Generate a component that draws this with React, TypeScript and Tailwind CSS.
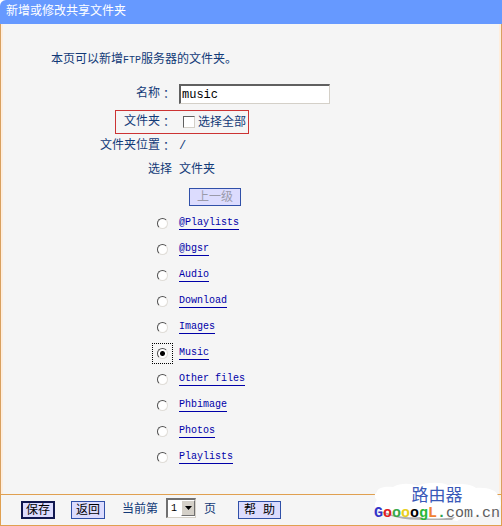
import React, { useState } from 'react';
import clsx from 'clsx';

const folders = [
  '@Playlists',
  '@bgsr',
  'Audio',
  'Download',
  'Images',
  'Music',
  'Other files',
  'Phbimage',
  'Photos',
  'Playlists',
];

const logoLetters = [
  { char: 'G', color: 'text-[#3434c8]' },
  { char: 'o', color: 'text-[#e02020]' },
  { char: 'o', color: 'text-[#38a848]' },
  { char: 'o', color: 'text-[#e8d020]' },
  { char: 'o', color: 'text-black' },
  { char: 'g', color: 'text-[#28b838]' },
  { char: 'L', color: 'text-[#f08030]' },
  { char: '.', color: 'text-[#30a050]' },
];

interface FormButtonProps {
  children: React.ReactNode;
  className?: string;
  disabled?: boolean;
}

const FormButton: React.FC<FormButtonProps> = ({ children, className, disabled }) => (
  <button
    type="button"
    disabled={disabled}
    className={clsx(
      'h-[18px] shrink-0 bg-[#dcdcfe] pt-px text-center leading-4 whitespace-pre',
      disabled ? 'text-[#9a9aaa]' : 'text-black',
      className
    )}
  >
    {children}
  </button>
);

// The TC face centres the full-width colon in its box
const Colon: React.FC = () => (
  <span className="inline-block align-top font-['Noto_Sans_CJK_TC',sans-serif] leading-4">：</span>
);

const SiteLogo: React.FC = () => (
  <div className="absolute right-0 bottom-1 h-10 w-32">
    <svg viewBox="0 0 128 40" className="absolute inset-0 h-full w-full" aria-hidden="true">
      <path d="M4 28 C14 36 32 39 50 39 L80 39 C86 38 87 36 84 33 L50 31 Z" fill="#b0b0b0" />
      <path
        d="M4 11 C4 6 14 5 20 6 C27 2 38 2 44 5 C54 1 68 1 75 4 C87 2 98 3 103 7 C114 6 124 9 125 15 C130 21 128 31 118 33 C110 36 98 35 93 35 L84 40 L79 39 L82 36 C67 38 53 38 47 36 C34 37 20 35 15 32 C3 31 -1 25 4 19 C1 16 1 13 4 11 Z"
        fill="#ffffff"
      />
    </svg>
    <div className="relative pt-1 text-center">
      <p className="text-[17px] leading-6 text-[#3858b8]">路由器</p>
      <p className="text-[15px] leading-[10px] text-[#606060]">
        {logoLetters.map((letter, i) => (
          <span key={i} className={clsx('font-bold', letter.color)}>{letter.char}</span>
        ))}
        com.cn
      </p>
    </div>
  </div>
);

const App: React.FC = () => {
  const [name, setName] = useState('music');
  const [selected, setSelected] = useState('Music');

  return (
    <div className="bg-white font-['Liberation_Mono','Noto_Sans_CJK_SC',monospace] text-[12px] leading-4 text-[#123a78]">
      <div className="flex min-h-screen flex-col overflow-hidden rounded-tl-md">
        <header className="flex h-6 items-center bg-[#6699ff] pl-[6px] text-white">
          <h1>新增或修改共享文件夹</h1>
        </header>

        <main className="flex-1 border-x border-[#d8a060] bg-[#f5f5f5] pt-7 pb-4 shadow-[inset_2px_0_#ffeedd,inset_-2px_0_#ffeedd]">
          <p className="pl-[50px]">
            本页可以新增<span className="text-[10px]">FTP</span>服务器的文件夹。
          </p>

          <div className="mt-[15px] flex h-5 items-center gap-[7px]">
            <label htmlFor="name" className="w-[171px] text-right">名称<Colon /></label>
            <input
              id="name"
              type="text"
              value={name}
              onChange={(e) => setName(e.target.value)}
              className="h-5 w-[151px] border border-t-2 border-l-2 border-[#d4d0c8] border-t-[#606060] border-l-[#606060] bg-white px-px text-black outline-none"
            />
          </div>

          <div className="mt-[6px] ml-[114px] flex h-6 w-[134px] items-center border border-[#cc3333]">
            <span className="w-14 text-right">文件夹<Colon /></span>
            <input
              id="all"
              type="checkbox"
              className="mr-[3px] ml-[11px] h-3 w-3 appearance-none border border-[#d4d0c8] border-t-[#606060] border-l-[#606060] bg-white checked:bg-[#606060]"
            />
            <label htmlFor="all" className="pt-[2px] whitespace-nowrap">选择全部</label>
          </div>

          <div className="mt-1 flex h-4 gap-[7px]">
            <span className="w-[171px] text-right">文件夹位置<Colon /></span>
            <span>/</span>
          </div>

          <div className="mt-2 flex h-4 gap-[7px]">
            <span className="w-[171px] text-right">选择</span>
            <span>文件夹</span>
          </div>

          <div className="mt-[10px] flex pl-[188px]">
            <FormButton disabled className="w-[52px] border border-[#3050a8]">上一级</FormButton>
          </div>

          <ul className="mt-1">
            {folders.map((folder) => (
              <li key={folder} className="flex h-[26px] items-center gap-[6px] pl-[151px]">
                <span
                  className={clsx(
                    'flex h-[21px] w-[21px] items-center justify-center border border-dotted',
                    selected === folder ? 'border-black' : 'border-transparent'
                  )}
                >
                  <input
                    type="radio"
                    name="folder"
                    aria-label={folder}
                    checked={selected === folder}
                    onChange={() => setSelected(folder)}
                    className="h-[11px] w-[11px] appearance-none rounded-full border border-[#e0ddd8] border-t-[#505050] border-l-[#505050] bg-white outline-none checked:bg-[radial-gradient(circle,#000_2px,#fff_3px)]"
                  />
                </span>
                <a
                  href="#"
                  className="border-b border-[#0000a8] text-[10px] leading-3 text-[#0000a8]"
                >
                  {folder}
                </a>
              </li>
            ))}
          </ul>
        </main>

        <footer className="relative flex h-8 items-center border border-[#e0a050] bg-[#f5f5f5] pl-5">
          <FormButton className="w-[34px] border-2 border-[#101850] leading-[14px]">保存</FormButton>
          <FormButton className="ml-4 w-[34px] border border-[#3050a8]">返回</FormButton>
          <label htmlFor="page" className="ml-[17px] whitespace-nowrap">当前第</label>
          <span className="relative mb-1 ml-2 flex">
            <select
              id="page"
              className="h-5 w-[30px] appearance-none border border-t-2 border-l-2 border-[#d4d0c8] border-t-[#707070] border-l-[#707070] bg-white pl-[3px] text-[10px] text-black outline-none"
            >
              <option>1</option>
            </select>
            <span className="pointer-events-none absolute top-[2px] right-px flex h-4 w-[14px] items-center justify-center border border-[#707070] border-t-white border-l-white bg-[#d4d0c8]">
              <svg viewBox="0 0 7 4" className="h-1 w-[7px]" aria-hidden="true">
                <path d="M0 0 H7 L3.5 4 Z" fill="#000" />
              </svg>
            </span>
          </span>
          <span className="ml-2">页</span>
          <FormButton className="ml-[22px] w-[43px] border border-[#3050a8]">帮 助</FormButton>
          <SiteLogo />
        </footer>
      </div>
    </div>
  );
};

export default App;
